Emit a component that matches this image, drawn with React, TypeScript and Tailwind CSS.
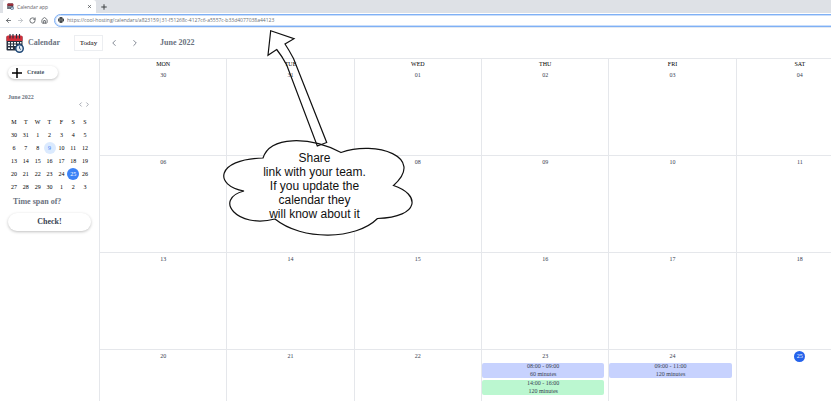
import { ArrowLeft, ArrowRight, ChevronLeft, ChevronRight, Globe, Home, Plus, RotateCw, X } from "lucide-react";

type CalendarEvent = { time: string; length: string; color: string };
type Day = { date: string; weekday?: string; today?: boolean; events?: CalendarEvent[] };

const days: Day[] = [
  { weekday: "MON", date: "30" },
  { weekday: "TUE", date: "31" },
  { weekday: "WED", date: "01" },
  { weekday: "THU", date: "02" },
  { weekday: "FRI", date: "03" },
  { weekday: "SAT", date: "04" },
  { date: "06" },
  { date: "07" },
  { date: "08" },
  { date: "09" },
  { date: "10" },
  { date: "11" },
  { date: "13" },
  { date: "14" },
  { date: "15" },
  { date: "16" },
  { date: "17" },
  { date: "18" },
  { date: "20" },
  { date: "21" },
  { date: "22" },
  {
    date: "23",
    events: [
      { time: "08:00 - 09:00", length: "60 minutes", color: "bg-[#c7d2fe]" },
      { time: "14:00 - 16:00", length: "120 minutes", color: "bg-[#bbf7d0]" },
    ],
  },
  { date: "24", events: [{ time: "09:00 - 11:00", length: "120 minutes", color: "bg-[#c7d2fe]" }] },
  { date: "25", today: true },
];

const weekdays = ["M", "T", "W", "T", "F", "S", "S"];
const weeks = [
  [30, 31, 1, 2, 3, 4, 5],
  [6, 7, 8, 9, 10, 11, 12],
  [13, 14, 15, 16, 17, 18, 19],
  [20, 21, 22, 23, 24, 25, 26],
  [27, 28, 29, 30, 1, 2, 3],
];

function CalendarLogo({ className }: { className: string }) {
  return (
    <svg viewBox="0 0 36 38" className={className} aria-hidden="true">
      <rect x="1" y="4" width="32" height="29" rx="2" fill="#28303f" />
      <path d="M1 6a3 3 0 0 1 3-3h26a3 3 0 0 1 3 3v8H1z" fill="#d32f3a" />
      <path d="M8 1v7M14 1v7M21 1v7M27 1v7" stroke="#28303f" strokeWidth="2.4" strokeLinecap="round" />
      <g fill="#f3f4f6">
        <path d="M4 16h4v3H4zM10 16h4v3h-4zM16 16h4v3h-4zM22 16h4v3h-4zM28 16h3v3h-3z" />
        <path d="M4 21h4v3H4zM10 21h4v3h-4zM16 21h4v3h-4zM4 27h4v3H4zM10 27h4v3h-4z" />
      </g>
      <circle cx="27" cy="29" r="7.5" fill="#e8eef5" stroke="#214a78" strokeWidth="3" />
      <path d="M27 24.5V29l3 2" fill="none" stroke="#214a78" strokeWidth="1.8" />
    </svg>
  );
}

function BrowserBar() {
  return (
    <div className="font-['Open_Sans',sans-serif] text-[#3c4043]">
      <div className="flex h-[13px] items-center bg-[#dee1e6] pl-[3px]">
        <div className="flex h-full w-[93px] items-center rounded-t-[3px] bg-white pl-1 pr-1">
          <CalendarLogo className="size-[7px]" />
          <span className="ml-[3px] flex-1 text-[5px] leading-[8px] text-[#5f6368]">Calendar app</span>
          <button aria-label="Close tab">
            <X className="size-[5px]" strokeWidth={3} />
          </button>
        </div>
        <button aria-label="New tab" className="ml-1">
          <Plus className="size-[8px]" strokeWidth={3} />
        </button>
      </div>
      <div className="flex h-[15px] items-center overflow-hidden border-b border-[#e3e9f1] bg-white pl-[5px]">
        <div className="flex w-[49px] shrink-0 gap-[5px] text-[#5f6368]">
          <button aria-label="Back"><ArrowLeft className="size-[7px]" strokeWidth={3} /></button>
          <button aria-label="Forward" className="text-[#bdc1c6]"><ArrowRight className="size-[7px]" strokeWidth={3} /></button>
          <button aria-label="Reload"><RotateCw className="size-[7px]" strokeWidth={3} /></button>
          <button aria-label="Home"><Home className="size-[7px]" strokeWidth={3} /></button>
        </div>
        <label className="-mr-2 flex h-[13px] flex-1 items-center rounded-full border border-[#7fb0f5] bg-white pl-[3px] ring-1 ring-[#c9defb] ring-inset">
          <Globe className="size-[6px] shrink-0 text-[#3c4043]" strokeWidth={4} />
          <input
            aria-label="Address"
            className="ml-[3px] h-[9px] flex-1 bg-transparent text-[5px] leading-[9px] text-[#6b7075] outline-none"
            defaultValue="https://cool-hosting/calendars/a823159|31-f51268c-4127c6-a5557c-b33d4077038a44123"
          />
        </label>
      </div>
    </div>
  );
}

function Header() {
  return (
    <header className="flex h-[30px] items-center pl-[6px] font-bold text-[#6b7280]">
      <CalendarLogo className="h-[19px] w-[18px]" />
      <h1 className="ml-1 w-[46px] text-[8px]">Calendar</h1>
      <button className="h-4 w-[29px] border border-[#eceef1] text-[7px] font-normal text-black">Today</button>
      <button aria-label="Previous month" className="ml-[6px]"><ChevronLeft className="size-[10px]" strokeWidth={2} /></button>
      <button aria-label="Next month" className="ml-[11px]"><ChevronRight className="size-[10px]" strokeWidth={2} /></button>
      <h2 className="ml-5 text-[8px]">June 2022</h2>
    </header>
  );
}

function MiniCalendar() {
  return (
    <table className="mt-[7px] w-[83px] table-fixed border-collapse text-center text-[6px] leading-[12px] text-black">
      <thead>
        <tr>
          {weekdays.map((name, i) => (
            <th key={i} className="h-[13px] p-0 font-normal">{name}</th>
          ))}
        </tr>
      </thead>
      <tbody>
        {weeks.map((week, w) => (
          <tr key={w}>
            {week.map((day) => (
              <td key={day} className="h-[13px] p-0">
                <button
                  className={
                    day === 25
                      ? "block size-[12px] rounded-full bg-[#3b82f6] text-white"
                      : day === 9
                        ? "block size-[12px] rounded-full bg-[#dbeafe] text-[#3b82f6]"
                        : "block size-[12px]"
                  }
                >
                  {day}
                </button>
              </td>
            ))}
          </tr>
        ))}
      </tbody>
    </table>
  );
}

function Sidebar() {
  return (
    <aside className="w-[99px] shrink-0 border-t border-[#f1f2f4] pl-2 pt-[7px]">
      <button className="flex h-[13px] w-[50px] items-center gap-1 rounded-full pl-[3px] text-[6px] font-bold text-[#4b5563] shadow-[0_1px_3px_rgba(0,0,0,0.25)]">
        <svg viewBox="0 0 12 12" className="size-3 text-black" aria-hidden="true">
          <path d="M6 1v10M1 6h10" stroke="currentColor" strokeWidth="1.5" />
        </svg>
        Create
      </button>
      <h2 className="mt-[14px] text-[6px] font-bold leading-[8px] text-[#6b7280]">June 2022</h2>
      <div className="flex w-[83px] justify-end text-[#6b7280]">
        <button aria-label="Previous month"><ChevronLeft className="size-[7px]" strokeWidth={2} /></button>
        <button aria-label="Next month"><ChevronRight className="size-[7px]" strokeWidth={2} /></button>
      </div>
      <MiniCalendar />
      <p className="mt-1 pl-[5px] text-[8px] font-bold leading-[10px] text-[#6b7280]">Time span of?</p>
      <button className="mt-px h-[18px] w-[83px] rounded-full text-[8px] font-bold text-[#374151] shadow-[0_1px_3px_rgba(0,0,0,0.25)]">
        Check!
      </button>
    </aside>
  );
}

function DayCell({ day }: { day: Day }) {
  return (
    <div className="h-[97px] border-l border-t border-[#e5e7eb] pt-px text-center text-[6px] leading-[8px] text-[#374151]">
      {day.weekday && <div className="mb-[3px] text-black">{day.weekday}</div>}
      {day.today ? (
        <div className="mx-auto size-[11px] rounded-full bg-[#2563eb] leading-[11px] text-white">{day.date}</div>
      ) : (
        <div className={day.weekday ? "" : "pt-px"}>{day.date}</div>
      )}
      {day.events && (
        <div className="mr-1 mt-[3px] flex flex-col gap-[2px]">
          {day.events.map((event) => (
            <div key={event.time} className={`h-[15px] rounded-[2px] leading-[8px] ${event.color}`}>
              <div className="h-[7px] leading-[7px]">{event.time}</div>
              <div>{event.length}</div>
            </div>
          ))}
        </div>
      )}
    </div>
  );
}

function ShareCallout() {
  return (
    <div className="pointer-events-none absolute left-[223px] top-[30px] h-[207px] w-[190px]">
      <svg viewBox="223 30 190 207" className="absolute inset-0 size-full" fill="none" stroke="#111" strokeWidth="1.2" aria-hidden="true">
        <path
          fill="#fff"
          d="M263 158C270 136 309 136 341 152.5C376 140 426 157 393.5 185.5C420 194 421 217 377.5 218.5C356 240 302 241 275 219C237 229 213 199 244 191C214 186 215 159 263 158Z"
        />
        <path d="M270.7 30.7 294 38.7 285 44Q289 50 293.5 58.5L326.7 142.5 317.3 146 286.7 65Q282 56 276.7 49.5L268 55.3Z" />
      </svg>
      <p className="absolute left-[36px] top-[121px] w-[111px] text-center font-['Liberation_Sans',Arial,sans-serif] text-[12px] leading-[14px] text-[#111]">
        Share
        <br />
        link with your team.
        <br />
        If you update the
        <br />
        calendar they
        <br />
        will know about it
      </p>
    </div>
  );
}

export default function App() {
  return (
    <div className="relative h-screen overflow-hidden bg-white font-['Liberation_Serif','Times_New_Roman',serif] text-[#1f2937]">
      <BrowserBar />
      <Header />
      <div className="flex">
        <Sidebar />
        <main className="min-w-0 flex-1 overflow-hidden">
          <div className="grid min-w-[764px] grid-cols-6">
            {days.map((day) => (
              <DayCell key={day.date + (day.weekday ?? "")} day={day} />
            ))}
          </div>
        </main>
      </div>
      <ShareCallout />
    </div>
  );
}
